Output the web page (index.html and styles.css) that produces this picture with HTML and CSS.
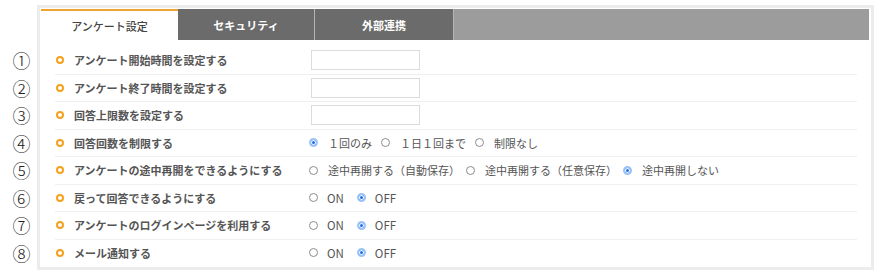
FILE: index.html
```html
<!DOCTYPE html>
<html lang="ja">
<head>
    <meta charset="UTF-8">
    <title>アンケート設定</title>
    <link rel="stylesheet" href="styles.css">
</head>
<body>
    <div class="page">
        <div class="nums">
            <div class="num">①</div>
            <div class="num">②</div>
            <div class="num">③</div>
            <div class="num">④</div>
            <div class="num">⑤</div>
            <div class="num">⑥</div>
            <div class="num">⑦</div>
            <div class="num">⑧</div>
        </div>

        <div class="panel">
            <div class="tabs">
                <div class="tab active">アンケート設定</div>
                <div class="tab">セキュリティ</div>
                <div class="tab tab-wide">外部連携</div>
                <div class="tab-rest"></div>
            </div>

            <div class="rows">
                <div class="row">
                    <div class="label"><span class="dot"></span>アンケート開始時間を設定する</div>
                    <div class="field"><input type="text" class="box"></div>
                </div>
                <div class="row">
                    <div class="label"><span class="dot"></span>アンケート終了時間を設定する</div>
                    <div class="field"><input type="text" class="box"></div>
                </div>
                <div class="row">
                    <div class="label"><span class="dot"></span>回答上限数を設定する</div>
                    <div class="field"><input type="text" class="box"></div>
                </div>
                <div class="row">
                    <div class="label"><span class="dot"></span>回答回数を制限する</div>
                    <div class="field">
                        <span class="opt"><span class="radio on"></span>１回のみ</span>
                        <span class="opt"><span class="radio"></span>１日１回まで</span>
                        <span class="opt"><span class="radio"></span>制限なし</span>
                    </div>
                </div>
                <div class="row">
                    <div class="label"><span class="dot"></span>アンケートの途中再開をできるようにする</div>
                    <div class="field">
                        <span class="opt opt-long"><span class="radio"></span>途中再開する（自動保存）</span>
                        <span class="opt opt-long"><span class="radio"></span>途中再開する（任意保存）</span>
                        <span class="opt opt-long"><span class="radio on"></span>途中再開しない</span>
                    </div>
                </div>
                <div class="row">
                    <div class="label"><span class="dot"></span>戻って回答できるようにする</div>
                    <div class="field">
                        <span class="opt opt-en"><span class="radio"></span>ON</span>
                        <span class="opt opt-en"><span class="radio on"></span>OFF</span>
                    </div>
                </div>
                <div class="row">
                    <div class="label"><span class="dot"></span>アンケートのログインページを利用する</div>
                    <div class="field">
                        <span class="opt opt-en"><span class="radio"></span>ON</span>
                        <span class="opt opt-en"><span class="radio on"></span>OFF</span>
                    </div>
                </div>
                <div class="row">
                    <div class="label"><span class="dot"></span>メール通知する</div>
                    <div class="field">
                        <span class="opt opt-en"><span class="radio"></span>ON</span>
                        <span class="opt opt-en"><span class="radio on"></span>OFF</span>
                    </div>
                </div>
            </div>
        </div>
    </div>
</body>
</html>
```

FILE: styles.css
```css
body {
    margin: 0;
    background-color: #fff;
    font-family: "Noto Sans CJK JP", "Noto Sans", sans-serif;
    color: #555;
}
.page {
    display: flex;
    width: 874px;
}
.nums {
    width: 31px;
    padding-left: 6px;
    padding-top: 47px;
}
.num {
    height: 27.5px;
    line-height: 27.5px;
    text-align: center;
    font-size: 18px;
    font-weight: 300;
    color: #222;
}
.panel {
    flex: 1;
    margin-top: 5px;
    height: 258px;
    border: 3px solid #ececec;
    padding: 1px 2px 0 1px;
    background-color: #fff;
}
.tabs {
    display: flex;
    height: 31px;
}
.tab {
    width: 136px;
    border-right: 1px solid #b5b5b5;
    background-color: #6b6b6b;
    color: #fff;
    font-size: 11px;
    font-weight: bold;
    display: flex;
    align-items: center;
    justify-content: center;
}
.tab-wide {
    width: 138px;
}
.tab.active {
    background-color: #fff;
    color: #444;
    font-weight: 500;
    border-top: 2px solid #f0a330;
    border-right: none;
    width: 137px;
}
.tab-rest {
    flex: 1;
    background-color: #9c9c9c;
}
.rows {
    margin: 7px 12px 0 14px;
}
.row {
    display: flex;
    align-items: center;
    height: 26.5px;
    border-bottom: 1px solid #efefef;
}
.row:last-child {
    border-bottom: none;
}
.label {
    width: 254px;
    display: flex;
    align-items: center;
    font-size: 11px;
    font-weight: bold;
    color: #555;
}
.dot {
    width: 4px;
    height: 4px;
    margin-left: 1px;
    margin-right: 10px;
    border: 2px solid #f4a11d;
    border-radius: 50%;
}
.field {
    display: flex;
    align-items: center;
    font-size: 11px;
}
.box {
    margin: 0 0 0 2px;
    padding: 0;
    width: 107px;
    height: 18px;
    border: 1px solid #dcdcdc;
    background-color: #fff;
}
.opt {
    display: flex;
    align-items: center;
    margin-right: 9px;
    color: #555;
}
.opt-long {
    margin-right: 6px;
}
.opt-en {
    margin-right: 13px;
    font-size: 11.5px;
}
.radio {
    box-sizing: border-box;
    width: 9px;
    height: 9px;
    margin-right: 10px;
    border: 1px solid #8c8c8c;
    border-radius: 50%;
}
.opt-en .radio {
    margin-right: 9px;
}
.radio.on {
    border: 2px solid #9cc3f7;
    background-color: #1d6fe6;
    box-shadow: inset 0 0 0 1px #fff;
}
```
